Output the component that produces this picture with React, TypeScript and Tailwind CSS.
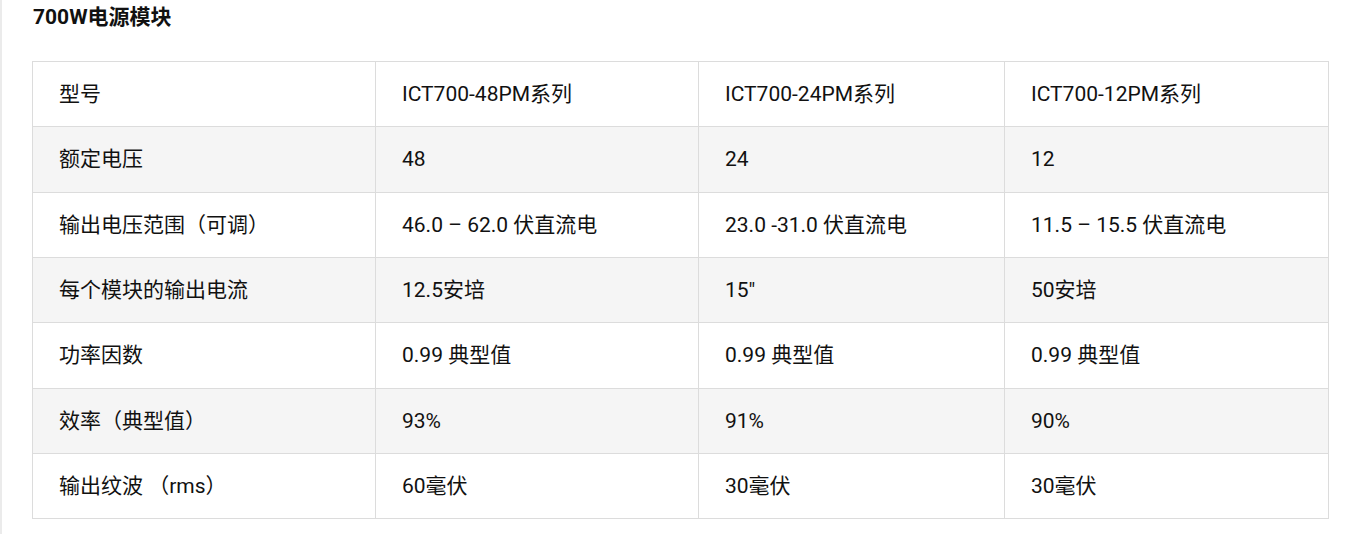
import React from "react";

const rows: string[][] = [
  ["型号", "ICT700-48PM系列", "ICT700-24PM系列", "ICT700-12PM系列"],
  ["额定电压", "48", "24", "12"],
  ["输出电压范围（可调）", "46.0 – 62.0 伏直流电", "23.0 -31.0 伏直流电", "11.5 – 15.5 伏直流电"],
  ["每个模块的输出电流", "12.5安培", "15\"", "50安培"],
  ["功率因数", "0.99 典型值", "0.99 典型值", "0.99 典型值"],
  ["效率（典型值）", "93%", "91%", "90%"],
  ["输出纹波 （rms）", "60毫伏", "30毫伏", "30毫伏"],
];

export default function App() {
  return (
    <div
      className="w-[1359px] h-[534px] bg-white border-l-2 border-[#ebebeb] text-[#111]"
      style={{ fontFamily: 'Roboto, "Noto Sans CJK SC", sans-serif' }}
    >
      <div className="pl-[31px] pt-[4px] h-[61px]">
        <h3 className="text-[21px] font-bold leading-[26px]">700W电源模块</h3>
      </div>
      <div className="pl-[30px]">
        <table className="border-collapse text-[21px]">
          <colgroup>
            <col className="w-[343px]" />
            <col className="w-[323px]" />
            <col className="w-[306px]" />
            <col className="w-[324px]" />
          </colgroup>
          <tbody>
            {rows.map((r, i) => (
              <tr key={i} className={i % 2 === 1 ? "bg-[#f5f5f5]" : "bg-white"}>
                {r.map((c, j) => (
                  <td
                    key={j}
                    className="h-[65.33px] border border-[#dcdcdc] pl-[26px] pr-2 align-middle leading-[24px]"
                  >
                    {c}
                  </td>
                ))}
              </tr>
            ))}
          </tbody>
        </table>
      </div>
    </div>
  );
}
